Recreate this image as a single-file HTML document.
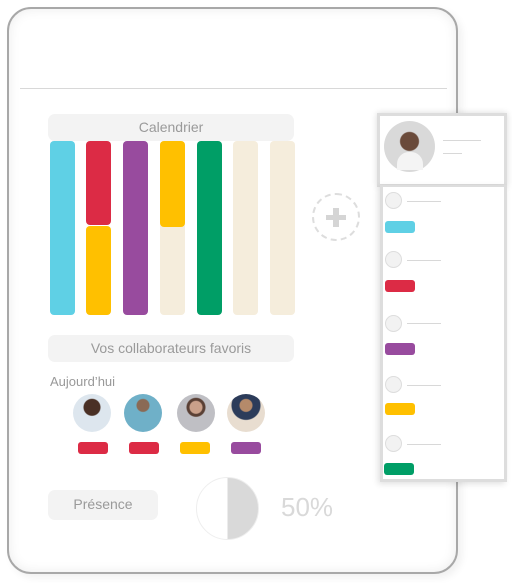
<!DOCTYPE html><html><head><style>
body{margin:0;width:512px;height:583px;background:#fff;position:relative;overflow:hidden;font-family:"Liberation Sans",sans-serif}
div{position:absolute;box-sizing:border-box}
.card{left:7px;top:7px;width:451px;height:567px;border:2px solid #a8a8a8;border-radius:24px;box-shadow:inset 0 0 12px rgba(0,0,0,.08),4px 4px 8px rgba(0,0,0,.06)}
.hdr{background:#f3f3f3;border-radius:7px;color:#9a9a9a;text-align:center;font-size:14px}
.bar{width:25px;border-radius:4px;bottom:268px}
.av{border-radius:50%;width:38px;height:38px;top:394px}
.cb{height:12px;width:30px;border-radius:3px;top:442px}
.lc{left:385px;width:17px;height:17px;border-radius:50%;background:#f2f2f2;border:1px solid #ddd}
.ll{left:407px;width:34px;height:1px;background:#d8d8d8}
.lb{left:385px;width:30px;height:12px;border-radius:3px}
</style></head><body>
<div class="card"></div>
<div style="left:20px;top:88px;width:427px;height:1px;background:#d8d8d8"></div>
<div class="hdr" style="left:48px;top:114px;width:246px;height:27px;line-height:27px">Calendrier</div>
<div class="bar" style="left:50px;top:141px;height:174px;background:#5fd0e5"></div>
<div class="bar" style="left:86px;top:141px;height:84px;background:#dc2b45"></div>
<div class="bar" style="left:86px;top:226px;height:89px;background:#ffc000"></div>
<div class="bar" style="left:123px;top:141px;height:174px;background:#984b9e"></div>
<div class="bar" style="left:160px;top:141px;height:174px;background:#f5eddc"></div>
<div class="bar" style="left:160px;top:141px;height:86px;background:#ffc000"></div>
<div class="bar" style="left:197px;top:141px;height:174px;background:#009e66"></div>
<div class="bar" style="left:233px;top:141px;height:174px;background:#f5eddc"></div>
<div class="bar" style="left:270px;top:141px;height:174px;background:#f5eddc"></div>
<div style="left:312px;top:193px;width:48px;height:48px;border:2px dashed #ddd;border-radius:50%"></div>
<div style="left:326px;top:215px;width:20px;height:5px;background:#d5d5d5"></div>
<div style="left:333px;top:208px;width:6px;height:19px;background:#d5d5d5"></div>
<div style="left:377px;top:113px;width:130px;height:74px;border:3px solid #ddd;box-shadow:0 0 6px rgba(0,0,0,.15);background:#fff"></div>
<div style="left:380px;top:185px;width:127px;height:297px;border:3px solid #ddd;border-top:2px solid #ddd;box-shadow:-2px 2px 6px rgba(0,0,0,.12);background:#fff"></div>
<div style="left:384px;top:121px;width:51px;height:51px;border-radius:50%;background:radial-gradient(circle at 50% 40%,#6a4a3a 0 9px,#d9d9d9 10px);"></div>
<div style="left:397px;top:152px;width:26px;height:18px;border-radius:12px 12px 0 0;background:#f4f4f4"></div>
<div style="left:443px;top:140px;width:38px;height:1px;background:#d8d8d8"></div>
<div style="left:443px;top:153px;width:19px;height:1px;background:#d8d8d8"></div>
<div class="lc" style="top:192px"></div><div class="ll" style="top:201px"></div><div class="lb" style="top:221px;background:#5fd0e5"></div>
<div class="lc" style="top:251px"></div><div class="ll" style="top:260px"></div><div class="lb" style="top:280px;background:#dc2b45"></div>
<div class="lc" style="top:315px"></div><div class="ll" style="top:323px"></div><div class="lb" style="top:343px;background:#984b9e"></div>
<div class="lc" style="top:376px"></div><div class="ll" style="top:385px"></div><div class="lb" style="top:403px;background:#ffc000"></div>
<div class="lc" style="top:435px"></div><div class="ll" style="top:444px"></div><div class="lb" style="top:463px;left:384px;background:#009e66"></div>
<div class="hdr" style="left:48px;top:335px;width:246px;height:27px;line-height:27px">Vos collaborateurs favoris</div>
<div style="left:50px;top:374px;font-size:13px;color:#999">Aujourd’hui</div>
<div class="av" style="left:73px;background:radial-gradient(circle at 50% 35%,#4a3025 0 8px,#dde6ee 9px)"></div>
<div class="av" style="left:124px;background:radial-gradient(circle at 50% 30%,#8a6a55 0 6px,#6fb0c8 7px)"></div>
<div class="av" style="left:177px;background:radial-gradient(circle at 50% 35%,#caa08a 0 6px,#5a4035 7px 9px,#bfbfc4 10px)"></div>
<div class="av" style="left:227px;background:radial-gradient(circle at 50% 30%,#b58a6a 0 6px,#2c3c5a 7px 14px,#e8ddd0 15px)"></div>
<div class="cb" style="left:78px;background:#dc2b45"></div>
<div class="cb" style="left:129px;background:#dc2b45"></div>
<div class="cb" style="left:180px;background:#ffc000"></div>
<div class="cb" style="left:231px;background:#984b9e"></div>
<div class="hdr" style="left:48px;top:490px;width:110px;height:30px;line-height:28px">Présence</div>
<div style="left:196px;top:477px;width:63px;height:63px;border-radius:50%;border:1px solid #eee;background:linear-gradient(90deg,#fff 50%,#d9d9d9 50%)"></div>
<div style="left:281px;top:492px;font-size:26px;color:#d9d9d9">50%</div>
</body></html>
